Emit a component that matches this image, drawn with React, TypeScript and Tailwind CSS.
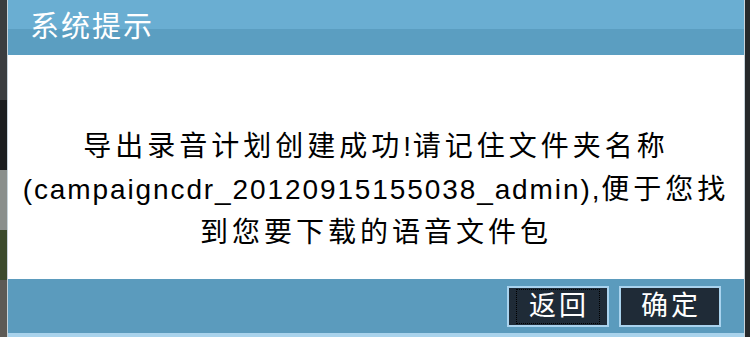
const font = { fontFamily: '"Liberation Sans", "Noto Sans CJK SC", sans-serif' }

function Cjk({ children }: { children: string }) {
  return <span className="tracking-[4px]">{children}</span>
}

function Lat({ children }: { children: string }) {
  return <span className="tracking-[1.9px]">{children}</span>
}

function DialogButton({ label, focused = false }: { label: string; focused?: boolean }) {
  return (
    <button
      type="button"
      className="flex h-[41px] w-[102px] items-center justify-center border-2 border-[#a9d3ee] bg-[#1f2b37] p-[1px] text-[27px] leading-none text-white"
    >
      <span
        className={`flex h-full items-center justify-center pl-[12px] pr-[10px] tracking-[3px] ${
          focused ? 'border border-dotted border-black' : 'border border-transparent'
        }`}
      >
        {label}
      </span>
    </button>
  )
}

export default function App() {
  return (
    <div className="flex h-[337px] w-[750px] overflow-hidden bg-[#2b2f31]" style={font}>
      {/* page behind the dialog */}
      <div className="flex w-[7px] flex-col">
        <div className="h-[100px] bg-[#3a3d3f]" />
        <div className="h-[70px] bg-[#1c1e1f]" />
        <div className="h-[60px] bg-[#8a8f8c]" />
        <div className="h-[50px] bg-[#3c4a2c]" />
        <div className="flex-1 bg-[#5d5a55]" />
      </div>

      <div className="flex flex-1 flex-col border-x border-[#c7d3da]">
        <div className="flex h-[55px] items-center bg-[linear-gradient(to_bottom,#6aaed2_0,#6aaed2_29px,#5b9ec1_29px,#5b9ec1_100%)] pl-[22px]">
          <span className="text-[29px] leading-none tracking-[2px] text-white">系统提示</span>
        </div>

        <div className="flex h-[224px] flex-col items-center bg-white pt-[70px] text-[28px] leading-[43px] text-black">
          <div>
            <Cjk>导出录音计划创建成功</Cjk>
            <Lat>!</Lat>
            <Cjk>请记住文件夹名称</Cjk>
          </div>
          <div>
            <Lat>(campaigncdr_20120915155038_admin),</Lat>
            <Cjk>便于您找</Cjk>
          </div>
          <div>
            <Cjk>到您要下载的语音文件包</Cjk>
          </div>
        </div>

        <div className="flex h-[54px] items-center justify-end gap-[10px] bg-[#5b9bbd] pr-[23px]">
          <DialogButton label="返回" focused />
          <DialogButton label="确定" />
        </div>
        <div className="h-[4px] bg-[#a9d3ec]" />
      </div>

      <div className="w-[5px] bg-[#26292b]" />
    </div>
  )
}
